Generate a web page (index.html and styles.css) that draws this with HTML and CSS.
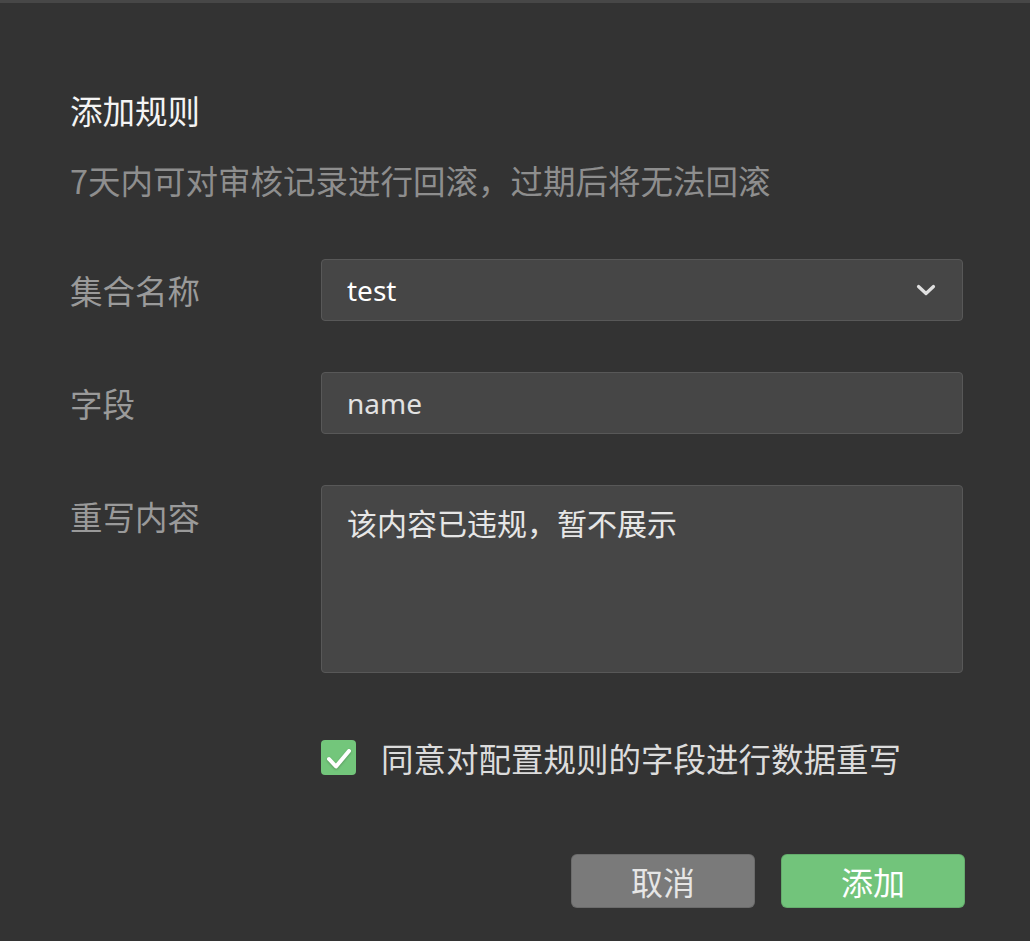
FILE: index.html
```html
<!DOCTYPE html>
<html lang="zh-CN">
<head>
<meta charset="utf-8">
<title>添加规则</title>
<link rel="stylesheet" href="styles.css">
</head>
<body>
<div class="dialog">
  <h1 class="title">添加规则</h1>
  <p class="subtitle">7天内可对审核记录进行回滚，过期后将无法回滚</p>
  <div class="form">
    <div class="row">
      <div class="label">集合名称</div>
      <div class="field select">
        <span class="value strong">test</span>
        <svg class="chevron" width="20" height="12" viewBox="0 0 20 12"><path d="M2.5 2.5 L10 9.5 L17.5 2.5" fill="none" stroke="#e0e0e0" stroke-width="3.2" stroke-linecap="round" stroke-linejoin="round"/></svg>
      </div>
    </div>
    <div class="row">
      <div class="label">字段</div>
      <div class="field input"><span class="value">name</span></div>
    </div>
    <div class="row">
      <div class="label">重写内容</div>
      <div class="field textarea"><span class="value">该内容已违规，暂不展示</span></div>
    </div>
    <div class="row check-row">
      <div class="label"></div>
      <label class="check">
        <span class="box"><svg width="35" height="35" viewBox="0 0 35 35"><path d="M8 19 L15 26.5 L28 11" fill="none" stroke="#ffffff" stroke-width="4" stroke-linecap="round" stroke-linejoin="round"/></svg></span>
        <span class="check-text">同意对配置规则的字段进行数据重写</span>
      </label>
    </div>
  </div>
  <div class="actions">
    <button class="btn cancel">取消</button>
    <button class="btn primary">添加</button>
  </div>
</div>
</body>
</html>
```

FILE: styles.css
```css
html, body {
  margin: 0;
  padding: 0;
  background: #333333;
}
body {
  font-family: "Noto Sans CJK SC", "Noto Sans", sans-serif;
  width: 1030px;
  height: 941px;
  overflow: hidden;
}
.dialog {
  border-top: 3px solid #474747;
  padding: 87px 65px 0 70px;
}
.title {
  margin: 0;
  font-size: 32.5px;
  font-weight: 400;
  line-height: 40px;
  color: #f4f4f4;
}
.subtitle {
  margin: 30px 0 0;
  font-size: 32.5px;
  line-height: 40px;
  color: #8e8e8e;
}
.form {
  margin-top: 59px;
  display: flex;
  flex-direction: column;
  gap: 51px;
}
.row {
  display: flex;
  align-items: flex-start;
}
.label {
  width: 251px;
  flex: none;
  font-size: 32.5px;
  line-height: 62px;
  color: #9a9a9a;
}
.field {
  box-sizing: border-box;
  width: 642px;
  height: 62px;
  background: #464646;
  border: 1px solid #585858;
  border-radius: 4px;
  display: flex;
  align-items: center;
  padding: 0 26px 0 25px;
}
.value {
  font-size: 28px;
  color: #e2e2e2;
  font-family: "Noto Sans", "Noto Sans CJK SC", sans-serif;
}
.value.strong {
  color: #ffffff;
}
.select {
  justify-content: space-between;
}
.chevron {
  display: block;
}
.textarea {
  height: 188px;
  align-items: flex-start;
  padding-top: 16px;
}
.textarea .value {
  font-family: "Noto Sans CJK SC", sans-serif;
  font-size: 30px;
  line-height: 40px;
  color: #e6e6e6;
}
.check-row {
  margin-top: 16px;
  align-items: center;
}
.check-row .label {
  line-height: 35px;
}
.check {
  display: flex;
  align-items: center;
  gap: 25px;
}
.box {
  width: 35px;
  height: 35px;
  border-radius: 4px;
  background: #73c67b;
  display: block;
}
.box svg {
  display: block;
  filter: drop-shadow(0 1px 1px rgba(0,0,0,0.25));
}
.check-text {
  font-size: 32.5px;
  line-height: 35px;
  color: #dcdcdc;
}
.actions {
  margin-top: 79px;
  display: flex;
  justify-content: flex-end;
  gap: 26px;
}
.btn {
  width: 184px;
  height: 54px;
  border: 1px solid rgba(0,0,0,0.12);
  border-radius: 6px;
  font-family: "Noto Sans CJK SC", sans-serif;
  font-size: 32px;
  line-height: 52px;
  padding: 0;
}
.cancel {
  background: #7a7a7a;
  color: #e6e6e6;
}
.primary {
  background: #72c47b;
  color: #ffffff;
}
```
